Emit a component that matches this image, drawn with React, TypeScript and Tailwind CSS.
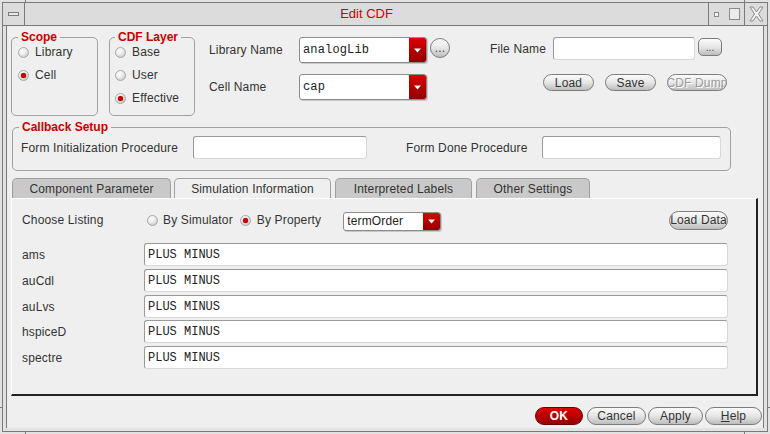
import React from "react";

const Radio = ({ on = false }: { on?: boolean }) => (
  <span className="flex h-[11px] w-[11px] shrink-0 items-center justify-center rounded-full border border-[#a8a8a8] bg-[radial-gradient(circle_at_35%_30%,#ffffff_0%,#ececec_45%,#b9b9b9_100%)]">
    {on && <span className="h-[5px] w-[5px] rounded-full bg-[#d00000] shadow-[0_0_1px_#600]" />}
  </span>
);

const Arrow = () => (
  <svg width="7" height="5" viewBox="0 0 7 5">
    <path d="M0 0.5H7L3.5 4.5Z" fill="#fff" />
  </svg>
);

const Combo = ({ value, className, mono = true }: { value: string; className: string; mono?: boolean }) => (
  <div className={`flex overflow-hidden rounded-[3px] border border-[#8c8c8c] bg-white shadow-[1px_1px_0_#c8c8c8] ${className}`}>
    <div
      className={`flex flex-1 items-center pl-[3px] text-[#222] ${
        mono ? "font-['Liberation_Mono',monospace] text-[12px]" : "text-[12px]"
      }`}
    >
      {value}
    </div>
    <div className="flex w-[17px] items-center justify-center bg-gradient-to-b from-[#dc0000] to-[#8e0000]">
      <Arrow />
    </div>
  </div>
);

const Field = ({ className, children }: { className: string; children?: React.ReactNode }) => (
  <div
    className={`flex items-center rounded-[3px] border border-t-[#9a9a9a] border-l-[#9a9a9a] border-r-[#d8d8d8] border-b-[#d8d8d8] bg-white ${className}`}
  >
    {children}
  </div>
);

const Pill = ({ children, className }: { children: React.ReactNode; className: string }) => (
  <div
    className={`flex items-center justify-center overflow-hidden whitespace-nowrap rounded-full border border-[#7c7c7c] bg-gradient-to-b from-[#fbfbfb] via-[#e6e6e6] to-[#bdbdbd] text-[12px] ${className}`}
  >
    {children}
  </div>
);

const rows = [
  { label: "ams", mt: "mt-0" },
  { label: "auCdl", mt: "mt-[3px]" },
  { label: "auLvs", mt: "mt-[3px]" },
  { label: "hspiceD", mt: "mt-[2px]" },
  { label: "spectre", mt: "mt-[3px]" },
];

const tabs = [
  { label: "Component Parameter", cls: "w-[159px] ml-[1px] bg-[#c9c9c9]" },
  { label: "Simulation Information", cls: "w-[157px] ml-[3px] bg-[#efefef]" },
  { label: "Interpreted Labels", cls: "w-[137px] ml-[4px] bg-[#c9c9c9]" },
  { label: "Other Settings", cls: "w-[114px] ml-[4px] bg-[#c9c9c9]" },
];

export default function App() {
  return (
    <div className="relative h-[434px] w-[770px] bg-[#e2e2e2] p-[2px] font-['Liberation_Sans',Arial,sans-serif] text-[12px] tracking-[0.15px] text-[#333]">
      {/* resize corner ticks */}
      <div className="absolute left-[25px] top-0 h-[3px] w-px bg-[#7a7a7a]" />
      <div className="absolute left-[744px] top-0 h-[3px] w-px bg-[#7a7a7a]" />
      <div className="absolute bottom-0 left-[25px] h-[3px] w-px bg-[#7a7a7a]" />
      <div className="absolute bottom-0 left-[744px] h-[3px] w-px bg-[#7a7a7a]" />
      <div className="absolute left-0 top-[407px] h-px w-[3px] bg-[#7a7a7a]" />
      <div className="absolute right-0 top-[407px] h-px w-[3px] bg-[#7a7a7a]" />

      <div className="flex h-full w-full flex-col border border-[#7a7a7a] px-[3px] pb-[3px]">
        {/* title bar */}
        <div className="-mx-[3px] flex h-[23px] shrink-0 border-b border-[#7a7a7a] bg-[#dcdcdc]">
          <div className="flex w-[22px] items-center justify-center border-r border-[#7a7a7a]">
            <div className="h-[4px] w-[11px] border border-[#7a7a7a] bg-[#e8e8e8]" />
          </div>
          <div className="flex flex-1 items-center justify-center text-[13px] tracking-normal text-[#cc0000]">Edit CDF</div>
          <div className="flex w-[36px] items-center border-l border-[#7a7a7a]">
            <div className="ml-[5px] h-[5px] w-[5px] border border-[#8a8a8a] bg-[#f4f4f4]" />
            <div className="ml-[10px] h-[12px] w-[11px] border border-[#8a8a8a] bg-[#ececec]" />
          </div>
          <div className="flex w-[23px] items-center justify-center border-l border-[#7a7a7a]">
            <svg width="15" height="16" viewBox="0 0 15 16">
              <path
                d="M1 1H4L7.5 6L11 1H14L9.5 8L14 15H11L7.5 10L4 15H1L5.5 8Z"
                fill="#f2f2f2"
                stroke="#8a8a8a"
                strokeWidth="1"
              />
            </svg>
          </div>
        </div>

        {/* content */}
        <div className="flex flex-1 flex-col border-x border-[#7a7a7a] bg-[#efefef]">
          {/* top row */}
          <div className="flex items-start pl-[4px] pt-[4px]">
            <fieldset className="h-[86px] w-[87px] rounded-[5px] border border-[#a0a0a0]">
              <legend className="ml-[6px] px-[3px] text-[12px] font-bold leading-[14px] tracking-normal text-[#cc0000]">Scope</legend>
              <div className="flex flex-col gap-[7px] pl-[6px]">
                <div className="flex h-[16px] items-center gap-[6px]">
                  <Radio />
                  <span>Library</span>
                </div>
                <div className="flex h-[16px] items-center gap-[6px]">
                  <Radio on />
                  <span>Cell</span>
                </div>
              </div>
            </fieldset>
            <fieldset className="ml-[11px] h-[86px] w-[86px] rounded-[5px] border border-[#a0a0a0]">
              <legend className="ml-[5px] px-[3px] text-[12px] font-bold leading-[14px] tracking-normal text-[#cc0000]">CDF Layer</legend>
              <div className="flex flex-col gap-[7px] pl-[5px]">
                <div className="flex h-[16px] items-center gap-[6px]">
                  <Radio />
                  <span>Base</span>
                </div>
                <div className="flex h-[16px] items-center gap-[6px]">
                  <Radio />
                  <span>User</span>
                </div>
                <div className="flex h-[16px] items-center gap-[6px]">
                  <Radio on />
                  <span>Effective</span>
                </div>
              </div>
            </fieldset>

            {/* library / cell */}
            <div className="ml-[14px] mt-[7px] flex flex-col">
              <div className="flex h-[26px] items-start">
                <span className="w-[90px] self-center">Library Name</span>
                <Combo value="analogLib" className="h-[26px] w-[128px]" />
                <Pill className="ml-[3px] mt-[1px] h-[20px] w-[20px] text-[10px] text-[#444]">...</Pill>
              </div>
              <div className="mt-[11px] flex h-[26px] items-start">
                <span className="w-[90px] self-center">Cell Name</span>
                <Combo value="cap" className="h-[26px] w-[128px]" />
              </div>
            </div>

            {/* file */}
            <div className="ml-[40px] mt-[7px] flex flex-col">
              <div className="flex items-start">
                <span className="mr-[7px] mt-[3px]">File Name</span>
                <Field className="h-[23px] w-[142px]" />
                <div className="ml-[3px] mt-[1px] flex h-[18px] w-[24px] items-center justify-center rounded-[5px] border border-[#7c7c7c] bg-gradient-to-b from-[#fbfbfb] via-[#e6e6e6] to-[#bdbdbd] text-[10px] text-[#444]">
                  ...
                </div>
              </div>
              <div className="mt-[14px] flex gap-[10px] pl-[53px]">
                <Pill className="h-[17px] w-[51px]">Load</Pill>
                <Pill className="ml-px h-[17px] w-[51px]">Save</Pill>
                <Pill className="ml-[1px] h-[17px] w-[60px] text-[#9a9a9a] [text-shadow:1px_1px_0_#fff]">CDF Dump</Pill>
              </div>
            </div>
          </div>

          {/* callback setup */}
          <fieldset className="ml-[5px] mt-[4px] h-[51px] w-[719px] rounded-[5px] border border-[#a0a0a0]">
            <legend className="ml-[6px] px-[3px] text-[12px] font-bold leading-[14px] tracking-normal text-[#cc0000]">Callback Setup</legend>
            <div className="mt-[2px] flex h-[23px] items-center pl-[8px]">
              <span className="w-[172px]">Form Initialization Procedure</span>
              <Field className="h-[23px] w-[174px]" />
              <span className="ml-[39px] w-[136px]">Form Done Procedure</span>
              <Field className="h-[23px] w-[179px]" />
            </div>
          </fieldset>

          {/* tabs */}
          <div className="ml-[4px] mt-[7px] flex flex-col">
            <div className="flex h-[20px] items-end">
              {tabs.map((t) => (
                <div
                  key={t.label}
                  className={`flex h-[20px] items-center justify-center rounded-t-[5px] border border-b-0 border-[#a0a0a0] ${t.cls}`}
                >
                  {t.label}
                </div>
              ))}
            </div>
            <div className="flex h-[198px] w-[747px] flex-col border-b-2 border-l border-r-2 border-t border-b-[#222] border-l-white border-r-[#222] border-t-white">
              <div className="mt-[11px] flex h-[20px] items-center pl-[10px] pr-[28px]">
                <span className="w-[125px]">Choose Listing</span>
                <Radio />
                <span className="ml-[5px]">By Simulator</span>
                <span className="ml-[7px]">
                  <Radio on />
                </span>
                <span className="ml-[6px]">By Property</span>
                <Combo value="termOrder" mono={false} className="ml-[22px] mt-[2px] h-[19px] w-[98px]" />
                <Pill className="ml-auto h-[19px] w-[59px]">Load Data</Pill>
              </div>
              <div className="mt-[13px] flex flex-col pl-[10px] pr-[28px]">
                {rows.map((r) => (
                  <div key={r.label} className={`flex h-[23px] items-center ${r.mt}`}>
                    <span className="w-[122px]">{r.label}</span>
                    <Field className="h-[23px] flex-1 pl-[3px] font-['Liberation_Mono',monospace] text-[12px] tracking-normal text-[#222]">
                      PLUS MINUS
                    </Field>
                  </div>
                ))}
              </div>
            </div>
          </div>

          {/* bottom buttons */}
          <div className="mt-[11px] flex justify-end pr-[1px]">
            <div className="flex h-[18px] w-[48px] items-center justify-center rounded-full border border-[#6a0000] bg-gradient-to-b from-[#e00000] to-[#960000] text-[12px] font-bold text-white">
              OK
            </div>
            <Pill className="ml-[4px] h-[18px] w-[59px]">Cancel</Pill>
            <Pill className="ml-[2px] h-[18px] w-[55px]">Apply</Pill>
            <Pill className="ml-[2px] h-[18px] w-[57px]">
              <span className="underline">H</span>elp
            </Pill>
          </div>
        </div>
      </div>
    </div>
  );
}
